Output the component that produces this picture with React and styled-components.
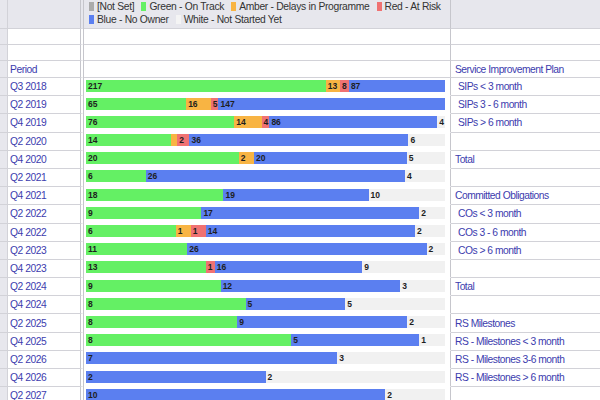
import React from 'react';
import styled, { createGlobalStyle } from 'styled-components';

const Global = createGlobalStyle`
  html, body { margin: 0; padding: 0; background: #fff; overflow: hidden; }
  body { font-family: "Liberation Sans", Arial, sans-serif; }
`;

const COLORS = ['#64f064', '#f8b443', '#f07272', '#5b7ff0', '#f1f1f1'];
const LINE = '#d2d2d8';
const TEXT_BLUE = '#3c3cae';

const Sheet = styled.div`
  width: 600px;
  height: 400px;
  overflow: hidden;
  display: flex;
  flex-direction: column;
`;

const Row = styled.div`
  display: flex;
  flex: 0 0 auto;
  height: ${(p) => p.$h}px;
  box-sizing: border-box;
  background: ${(p) => (p.$head ? '#e7e7ed' : '#fff')};
`;

const Strip = styled.div`
  width: 8px;
  flex: 0 0 8px;
  box-sizing: border-box;
  background: #e7e7ed;
  border-right: 1px solid ${LINE};
  border-bottom: 1px solid ${LINE};
`;

const PeriodCell = styled.div`
  width: 76px;
  flex: 0 0 76px;
  box-sizing: border-box;
  border-right: 4px double #c6c6cc;
  border-bottom: 1px solid ${LINE};
  padding-left: 2px;
  display: flex;
  align-items: center;
  font-size: 10.3px;
  letter-spacing: -0.45px;
  color: ${TEXT_BLUE};
  white-space: nowrap;
`;

const BarCell = styled.div`
  width: 367px;
  flex: 0 0 367px;
  box-sizing: border-box;
  border-right: 1px solid #c6c6cc;
  border-bottom: 1px solid ${(p) => (p.$lined ? LINE : 'transparent')};
  padding: 1.5px 6px 0 2px;
`;

const PlanCell = styled.div`
  flex: 1 1 auto;
  box-sizing: border-box;
  border-bottom: 1px solid ${LINE};
  padding-left: ${(p) => (p.$indent ? 7 : 4)}px;
  display: flex;
  align-items: center;
  font-size: 10.3px;
  letter-spacing: -0.5px;
  color: ${TEXT_BLUE};
  white-space: nowrap;
`;

const Legend = styled.div`
  display: flex;
  flex-direction: column;
  padding: 0 0 0 3px;
  margin-top: -1.5px;
`;

const LegendLine = styled.div`
  display: flex;
  align-items: center;
  height: 13px;
  gap: 7px;
`;

const LegendItem = styled.div`
  display: flex;
  align-items: center;
  gap: 3px;
  font-size: 10.3px;
  letter-spacing: -0.3px;
  color: #333;
  white-space: nowrap;
`;

const Swatch = styled.span`
  display: inline-block;
  width: 5px;
  height: 9px;
  background: ${(p) => p.$c};
`;

const Bar = styled.div`
  display: flex;
  height: 12px;
  width: 359px;
`;

const Seg = styled.div`
  height: 12px;
  background: ${(p) => p.$c};
  font-size: 8.5px;
  font-weight: bold;
  line-height: 12.5px;
  color: #1e1e1e;
  padding-left: 2px;
  box-sizing: border-box;
  overflow: hidden;
  white-space: nowrap;
  flex: 0 0 auto;
`;

const rows = [
  ['Q3 2018', [217, 13, 8, 87, 0], 'SIPs < 3 month', true],
  ['Q2 2019', [65, 16, 5, 147, 0], 'SIPs 3 - 6 month', true],
  ['Q4 2019', [76, 14, 4, 86, 4], 'SIPs > 6 month', true],
  ['Q2 2020', [14, 1, 2, 36, 6], '', false],
  ['Q4 2020', [20, 2, 0, 20, 5], 'Total', false],
  ['Q2 2021', [6, 0, 0, 26, 4], '', false],
  ['Q4 2021', [18, 0, 0, 19, 10], 'Committed Obligations', false],
  ['Q2 2022', [9, 0, 0, 17, 2], 'COs < 3 month', true],
  ['Q4 2022', [6, 1, 1, 14, 2], 'COs 3 - 6 month', true],
  ['Q2 2023', [11, 0, 0, 26, 2], 'COs > 6 month', true],
  ['Q4 2023', [13, 0, 1, 16, 9], '', false],
  ['Q2 2024', [9, 0, 0, 12, 3], 'Total', false],
  ['Q4 2024', [8, 0, 0, 5, 5], '', false],
  ['Q2 2025', [8, 0, 0, 9, 2], 'RS Milestones', false],
  ['Q4 2025', [8, 0, 0, 5, 1], 'RS - Milestones < 3 month', false],
  ['Q2 2026', [0, 0, 0, 7, 3], 'RS - Milestones 3-6 month', false],
  ['Q4 2026', [0, 0, 0, 2, 2], 'RS - Milestones > 6 month', false],
  ['Q2 2027', [0, 0, 0, 10, 2], '', false],
];

function StackBar({ values }) {
  const total = values.reduce((a, b) => a + b, 0);
  const W = 359;
  return (
    <Bar>
      {values.map((v, i) => {
        if (!v) return null;
        const w = (v / total) * W;
        return (
          <Seg key={i} $c={COLORS[i]} style={{ width: `${w}px` }}>
            {w >= 7 ? v : ''}
          </Seg>
        );
      })}
    </Bar>
  );
}

export default function App() {
  return (
    <Sheet>
      <Global />
      <Row $h={29} $head>
        <Strip />
        <PeriodCell />
        <BarCell $lined>
          <Legend>
            <LegendLine>
              <LegendItem><Swatch $c="#ababab" />[Not Set]</LegendItem>
              <LegendItem><Swatch $c={COLORS[0]} />Green - On Track</LegendItem>
              <LegendItem><Swatch $c={COLORS[1]} />Amber - Delays in Programme</LegendItem>
              <LegendItem><Swatch $c={COLORS[2]} />Red - At Risk</LegendItem>
            </LegendLine>
            <LegendLine>
              <LegendItem><Swatch $c={COLORS[3]} />Blue - No Owner</LegendItem>
              <LegendItem><Swatch $c="#f4f4f4" />White - Not Started Yet</LegendItem>
            </LegendLine>
          </Legend>
        </BarCell>
        <PlanCell />
      </Row>
      <Row $h={16}>
        <Strip />
        <PeriodCell />
        <BarCell $lined />
        <PlanCell />
      </Row>
      <Row $h={16}>
        <Strip />
        <PeriodCell />
        <BarCell $lined />
        <PlanCell />
      </Row>
      <Row $h={17}>
        <Strip />
        <PeriodCell>Period</PeriodCell>
        <BarCell $lined />
        <PlanCell>Service Improvement Plan</PlanCell>
      </Row>
      {rows.map(([period, values, plan, indent]) => (
        <Row key={period} $h={18.2}>
          <Strip />
          <PeriodCell>{period}</PeriodCell>
          <BarCell>
            <StackBar values={values} />
          </BarCell>
          <PlanCell $indent={indent}>{plan}</PlanCell>
        </Row>
      ))}
    </Sheet>
  );
}
